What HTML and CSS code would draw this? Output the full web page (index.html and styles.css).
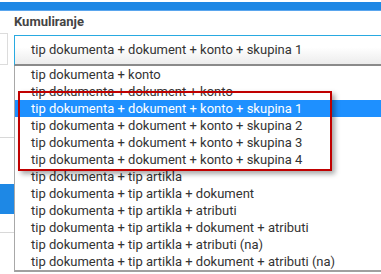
FILE: index.html
```html
<!DOCTYPE html>
<html lang="en">
<head>
    <meta charset="UTF-8">
    <title>Kumuliranje</title>
    <link rel="stylesheet" href="styles.css">
</head>
<body>

    <div class="top-bar"></div>

    <div class="page">
        <div class="side">
            <div class="side-input"></div>
            <div class="side-row"></div>
            <div class="side-row active"></div>
            <div class="side-row last"></div>
        </div>

        <div class="field">
            <label class="field-label">Kumuliranje</label>
            <div class="select-box">tip dokumenta + dokument + konto + skupina 1</div>

            <ul class="dropdown">
                <li>tip dokumenta + konto</li>
                <li>tip dokumenta + dokument + konto</li>
                <li class="selected">tip dokumenta + dokument + konto + skupina 1</li>
                <li>tip dokumenta + dokument + konto + skupina 2</li>
                <li>tip dokumenta + dokument + konto + skupina 3</li>
                <li>tip dokumenta + dokument + konto + skupina 4</li>
                <li>tip dokumenta + tip artikla</li>
                <li>tip dokumenta + tip artikla + dokument</li>
                <li>tip dokumenta + tip artikla + atributi</li>
                <li>tip dokumenta + tip artikla + dokument + atributi</li>
                <li>tip dokumenta + tip artikla + atributi (na)</li>
                <li>tip dokumenta + tip artikla + dokument + atributi (na)</li>
            </ul>

            <div class="highlight-box"></div>
        </div>
    </div>

</body>
</html>
```

FILE: styles.css
```css
body {
    margin: 0;
    font-family: Roboto, "Liberation Sans", Arial, sans-serif;
    background: white;
    overflow: hidden;
}
.top-bar {
    margin-top: 2px;
    height: 8px;
    background-color: #1e88e5;
    border-bottom: 1px solid #5aa6ee;
}
.page {
    display: flex;
    height: 263px;
    overflow: hidden;
}
.side {
    width: 14px;
    flex-shrink: 0;
    padding-top: 22px;
}
.side-input {
    width: 7px;
    height: 30px;
    border: 1px solid #dcdcdc;
    border-left: none;
    margin-bottom: 72px;
}
.side-row {
    height: 46px;
    border-top: 1px solid #d8d8d8;
}
.side-row.active {
    height: 30px;
    background-color: #1e88e5;
    border-top: none;
}
.side-row.last {
    margin-top: 18px;
}
.field {
    position: relative;
    flex: 1;
    min-width: 0;
    padding-top: 2px;
}
.field-label {
    display: block;
    font-size: 13px;
    font-weight: bold;
    color: #444;
    height: 22px;
    line-height: 17px;
}
.select-box {
    width: 400px;
    height: 28px;
    line-height: 27px;
    padding-left: 16px;
    font-size: 13px;
    color: #333;
    border: 1px solid #29aae1;
    border-right: none;
    border-bottom: 2px solid #8a8a8a;
    background: linear-gradient(#ffffff 40%, #ececec);
}
.dropdown {
    position: absolute;
    top: 55px;
    left: 0;
    width: 400px;
    margin: 0;
    padding: 0;
    list-style: none;
    background: white;
    border-left: 1px solid #a8a8a8;
    border-bottom: 2px solid #a0a0a0;
}
.dropdown li {
    height: 17px;
    line-height: 17px;
    padding-left: 16px;
    font-size: 13px;
    color: #333;
}
.dropdown li.selected {
    background-color: #1e90ff;
    color: white;
}
.highlight-box {
    position: absolute;
    top: 80px;
    left: 4px;
    width: 310px;
    height: 76px;
    border: 2px solid #c00000;
    box-shadow: 3px 3px 5px rgba(0, 0, 0, 0.35);
}
```
